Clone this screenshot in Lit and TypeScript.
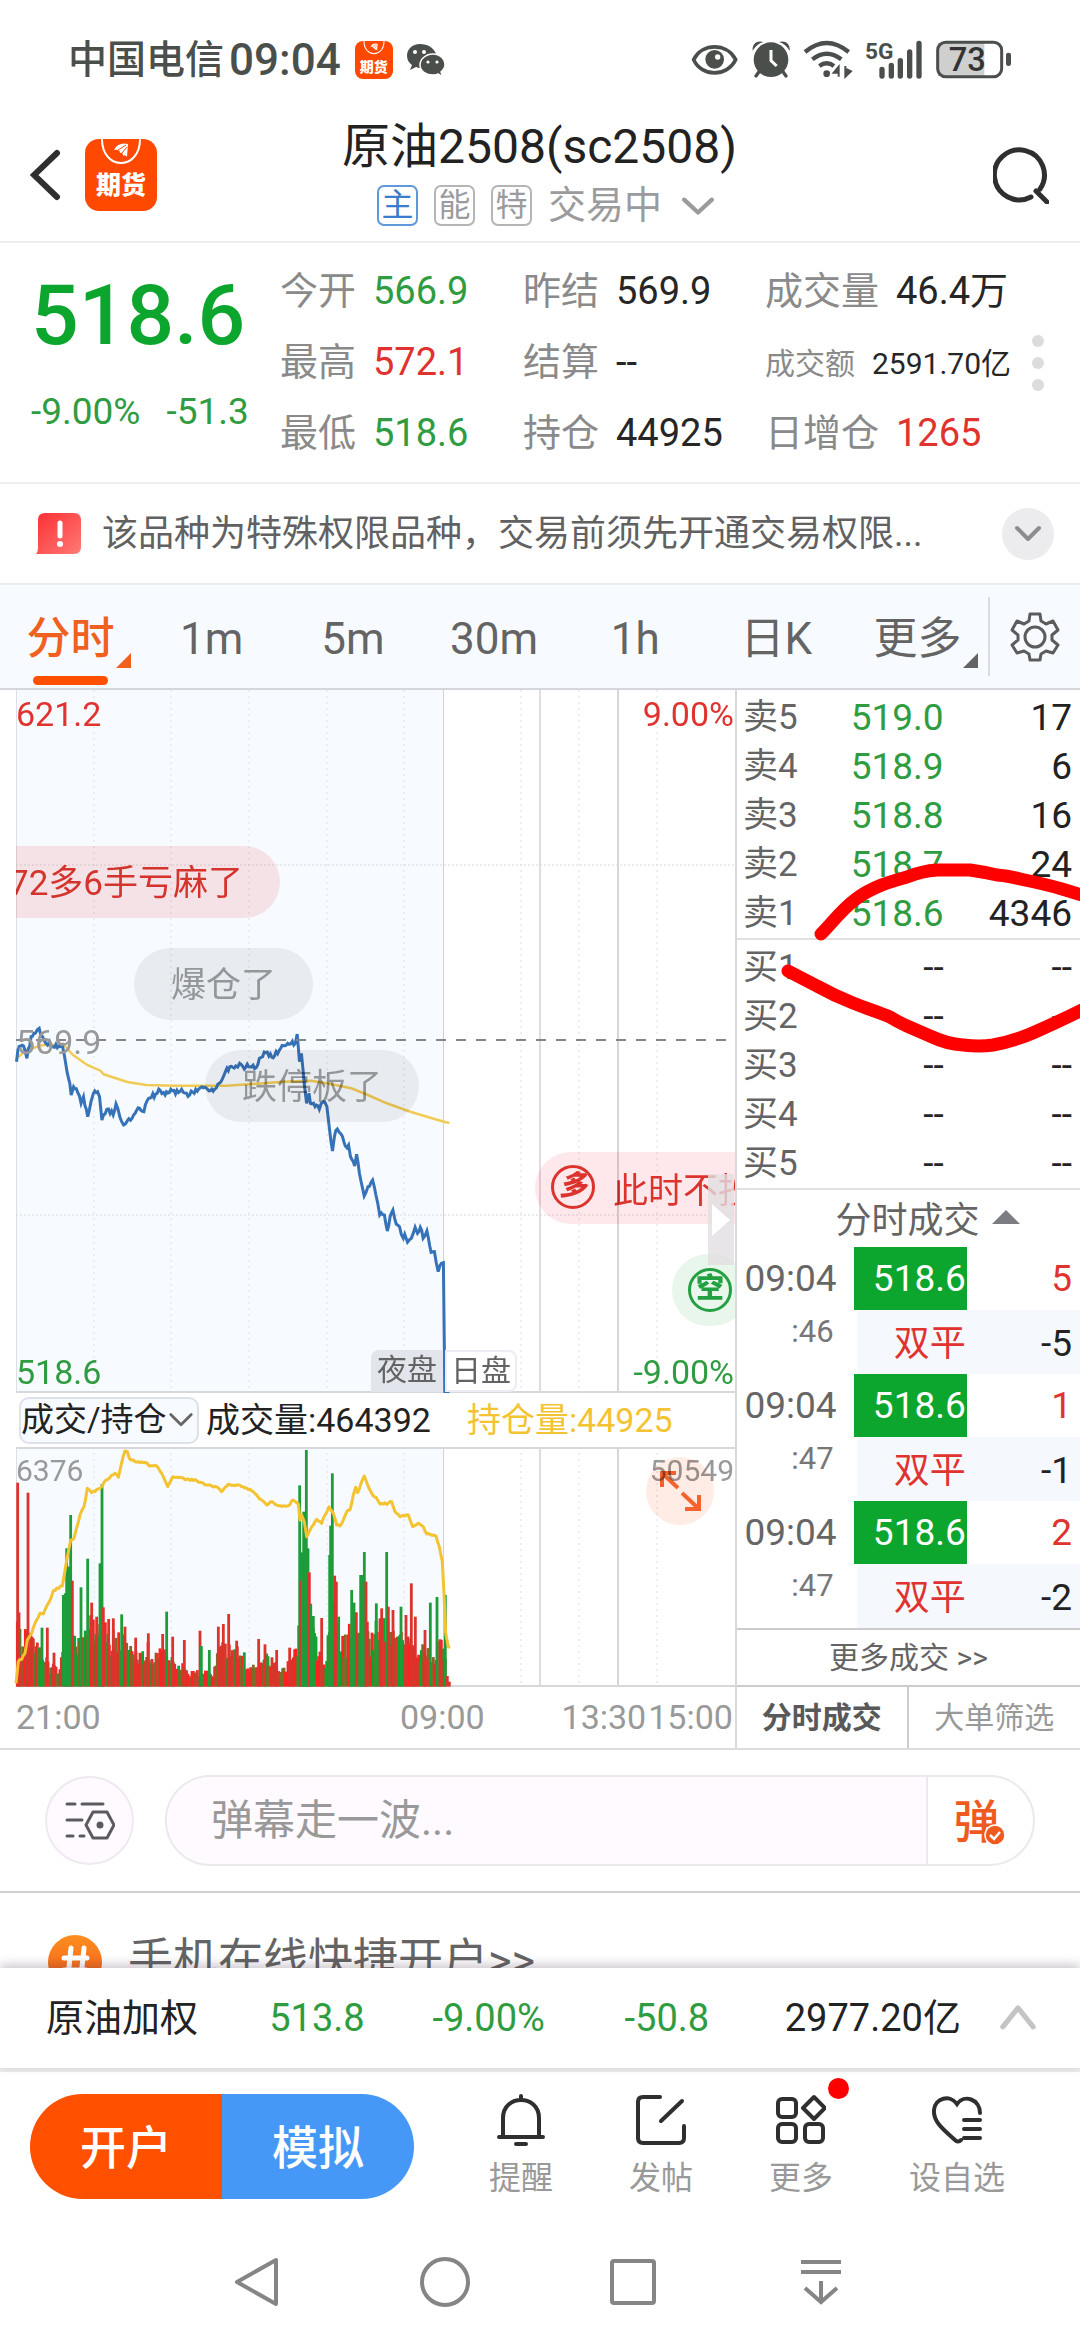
import { LitElement, html, svg, css } from "lit";
import { customElement } from "lit/decorators.js";
import { classMap } from "lit/directives/class-map.js";

type Point = [number, number];
type Spike = [number, number, "up" | "down"];

/* ---------- data ---------- */

const stats = [
  { label: "今开", value: "566.9", tone: "green" },
  { label: "昨结", value: "569.9", tone: "dark" },
  { label: "成交量", value: "46.4万", tone: "dark" },
  { label: "最高", value: "572.1", tone: "red" },
  { label: "结算", value: "--", tone: "dark" },
  { label: "成交额", value: "2591.70亿", tone: "dark", small: true },
  { label: "最低", value: "518.6", tone: "green" },
  { label: "持仓", value: "44925", tone: "dark" },
  { label: "日增仓", value: "1265", tone: "red" },
];

const periods = ["分时", "1m", "5m", "30m", "1h", "日K", "更多"];

const asks = [
  ["卖5", "519.0", "17"],
  ["卖4", "518.9", "6"],
  ["卖3", "518.8", "16"],
  ["卖2", "518.7", "24"],
  ["卖1", "518.6", "4346"],
];
const bids = ["买1", "买2", "买3", "买4", "买5"];

const ticks = [
  { time: "09:04", sec: ":46", price: "518.6", lots: "5", kind: "双平", change: "-5" },
  { time: "09:04", sec: ":47", price: "518.6", lots: "1", kind: "双平", change: "-1" },
  { time: "09:04", sec: ":47", price: "518.6", lots: "2", kind: "双平", change: "-2" },
];

/* Price, average and open-interest series, in units of their own plotting grid. */
const priceRaw: Point[] = [
  [35,425],[38,390],[50,378],[57,415],[66,350],[75,340],[83,325],[90,350],[97,370],[105,365],[112,380],[125,378],[132,375],[137,410],
  [142,455],[148,490],[151,525],[156,500],[165,518],[172,550],[177,530],[186,590],[193,545],[198,520],[207,515],[211,530],[216,600],
  [230,567],[240,585],[246,552],[254,590],[262,615],[270,602],[280,595],[296,565],[305,575],[315,535],[330,522],[340,512],[350,525],
  [362,508],[372,522],[385,508],[402,525],[415,508],[428,500],[440,508],[455,508],[465,490],[475,465],[487,440],[500,438],[508,430],
  [515,440],[530,440],[543,443],[550,415],[560,396],[570,408],[582,408],[595,385],[610,370],[626,370],[630,342],[635,425],[639,400],
  [645,490],[650,550],[655,520],[658,550],[668,560],[677,568],[685,545],[693,560],[698,620],[705,693],[709,650],[715,627],[723,642],
  [732,678],[739,675],[743,710],[752,738],[756,703],[762,760],[772,828],[780,800],[790,780],[797,825],[805,885],[815,885],[821,933],
  [827,890],[833,870],[840,912],[847,920],[855,955],[858,943],[864,967],[872,955],[880,922],[885,940],[891,922],[897,955],[905,933],
  [914,997],[921,995],[929,1055],[936,1030],[940,1028],
];
const averageRaw: Point[] = [
  [35,415],[57,390],[90,375],[135,375],[155,405],[185,435],[213,452],[220,463],[270,486],[310,495],[370,497],[480,497],[560,490],
  [600,485],[660,482],[700,492],[745,505],[780,525],[820,550],[870,575],[905,590],[945,607],[953,609],
];
const interestRaw: Point[] = [
  [48,910],[55,845],[65,838],[75,820],[82,780],[95,760],[105,730],[120,700],[130,702],[148,665],[160,632],[187,618],[200,540],
  [212,480],[222,475],[240,405],[252,380],[262,325],[275,338],[300,325],[318,300],[345,280],[355,292],[368,235],[375,213],[382,215],
  [388,235],[405,245],[440,248],[448,258],[470,258],[485,280],[503,320],[518,290],[560,298],[590,302],[620,315],[650,320],[665,335],
  [685,313],[720,316],[750,328],[770,345],[785,360],[800,375],[815,365],[835,377],[865,377],[880,360],[895,372],[900,420],[905,405],
  [913,425],[920,470],[930,450],[940,435],[950,418],[965,430],[975,405],[987,380],[1000,400],[1010,435],[1020,438],[1030,420],
  [1040,395],[1050,390],[1060,345],[1067,322],[1073,338],[1093,288],[1105,320],[1118,345],[1128,352],[1140,372],[1165,370],
  [1175,365],[1185,395],[1200,410],[1225,405],[1238,440],[1255,430],[1270,440],[1280,462],[1300,465],[1308,468],[1318,500],
  [1327,545],[1332,640],[1337,760],[1345,800],[1350,803],
];
const envelope: Point[] = [
  [48,720],[100,760],[150,850],[182,850],[190,660],[215,680],[230,750],[270,700],[330,730],[370,760],[400,810],[450,780],[500,810],
  [550,840],[570,870],[640,870],[660,770],[720,790],[750,865],[790,800],[840,860],[890,790],[897,640],[910,540],[925,620],[945,750],
  [975,860],[985,740],[1000,640],[1020,780],[1060,710],[1100,750],[1150,690],[1200,750],[1250,790],[1300,790],[1335,760],
];
const spikes: Spike[] = [
  [53,308,"up"],[84,338,"up"],[57,697,"up"],[126,743,"down"],[142,743,"up"],[162,818,"up"],[190,645,"down"],[196,640,"down"],
  [200,505,"down"],[206,560,"down"],[212,405,"down"],[217,602,"up"],[243,622,"down"],[263,536,"down"],[275,668,"up"],[290,710,"up"],
  [300,550,"down"],[306,312,"down"],[310,682,"up"],[326,717,"up"],[340,715,"up"],[365,703,"down"],[375,740,"up"],[407,773,"up"],
  [445,760,"up"],[488,762,"up"],[500,695,"down"],[518,770,"up"],[553,780,"up"],[600,752,"up"],[604,798,"down"],[628,810,"down"],
  [655,740,"up"],[670,732,"up"],[686,702,"up"],[710,782,"up"],[733,817,"down"],[776,777,"up"],[795,793,"up"],[830,810,"up"],
  [869,803,"up"],[899,316,"down"],[902,602,"up"],[907,517,"down"],[911,395,"down"],[915,500,"down"],[919,210,"down"],
  [924,505,"down"],[928,577,"up"],[932,675,"down"],[940,708,"down"],[965,714,"up"],[989,525,"down"],[992,437,"down"],
  [997,280,"down"],[1004,587,"up"],[1009,605,"up"],[1016,710,"down"],[1055,630,"down"],[1062,668,"down"],[1069,697,"up"],
  [1082,585,"down"],[1088,585,"down"],[1093,516,"down"],[1098,605,"up"],[1102,725,"up"],[1129,670,"down"],[1145,685,"up"],
  [1160,516,"down"],[1165,680,"up"],[1179,690,"up"],[1203,680,"down"],[1218,705,"up"],[1234,610,"up"],[1246,710,"up"],
  [1275,750,"up"],[1291,668,"down"],[1311,651,"down"],[1320,778,"up"],[1336,645,"down"],[1342,888,"up"],[1348,905,"up"],
];

/* Small repeatable generator so the minute-by-minute texture is stable. */
function seeded(seed: number) {
  let s = seed;
  return () => {
    s = (s * 16807) % 2147483647;
    return s / 2147483647;
  };
}

function interpolate(points: Point[], x: number): number {
  for (let i = 1; i < points.length; i++) {
    if (x <= points[i][0]) {
      const [x0, y0] = points[i - 1];
      const [x1, y1] = points[i];
      return y0 + ((y1 - y0) * (x - x0)) / (x1 - x0);
    }
  }
  return points[points.length - 1][1];
}

function roughen(points: Point[], step: number, amount: number, seed: number): Point[] {
  const rnd = seeded(seed);
  const out: Point[] = [];
  points.forEach((p, i) => {
    if (i > 0) {
      const [x0, y0] = points[i - 1];
      const n = Math.floor((p[0] - x0) / step);
      for (let k = 1; k < n; k++) {
        const t = k / n;
        out.push([x0 + (p[0] - x0) * t, y0 + (p[1] - y0) * t + (rnd() - 0.5) * amount]);
      }
    }
    out.push(p);
  });
  return out;
}

const toLine = (points: Point[], sx: number, sy: number, dy: number) =>
  points.map(([x, y]) => `${(x / sx).toFixed(1)},${(y / sy + dy).toFixed(1)}`).join(" ");

const priceLine = toLine([...roughen(priceRaw, 3, 16, 77), [943, 1417], [953, 1417]], 2.12, 3, 230);
const averageLine = toLine(averageRaw, 2.12, 3, 230);
const interestLine = toLine(roughen(interestRaw, 5, 6, 31), 3, 3, -67);

function volumeBars() {
  const rnd = seeded(2508);
  const bars: { x: number; y: number; color: string }[] = [];
  for (let x = 52; x < 1338; x += 4) {
    const top = interpolate(envelope, x);
    const y = top + (918 - top) * (rnd() * 0.52);
    const greenZone = (x > 185 && x < 260) || (x > 895 && x < 1000) || (x > 1010 && x < 1140);
    const r = rnd();
    const color = r < (greenZone ? 0.5 : 0.16) ? "#0ca52e" : r < (greenZone ? 0.7 : 0.42) ? "#7d6b28" : r < 0.7 ? "#d8352b" : "#fb2320";
    bars.push({ x, y, color });
  }
  for (const [x, y, dir] of spikes) bars.push({ x, y, color: dir === "up" ? "#dd332d" : "#1e9c3a" });
  return bars;
}
const bars = volumeBars();

/* ---------- icons ---------- */

const chevron = (points: string, cls: string) => html`
  <svg class=${cls} viewBox="0 0 30 30" fill="none" aria-hidden="true">
    <polyline points=${points} stroke="currentColor" stroke-width="4" stroke-linecap="round" stroke-linejoin="round" />
  </svg>`;

const bagMark = html`
  <svg class="bag" viewBox="0 0 72 30" fill="none" aria-hidden="true">
    <path d="M17 0 C17 32 55 32 55 0" stroke="#fff" stroke-width="2" />
    <path d="M29 11 Q33 3 43 5 L42 18 Q40 15 38 17 Q38 13 35 14 Q35 10 29 11Z" fill="#fff" />
    <path d="M33 11 L41 6 M37 14 L42 8" stroke="#ff4800" stroke-width="1" />
  </svg>`;

@customElement("app-root")
export class AppRoot extends LitElement {
  static styles = css`
    :host {
      display: block;
      font-family: Roboto, "Noto Sans CJK SC", sans-serif;
      color: #222;
      background: #fff;
    }
    * { box-sizing: border-box; }
    button {
      font: inherit;
      color: inherit;
      background: none;
      border: 0;
      padding: 0;
      margin: 0;
    }
    svg { display: block; }
    .page { height: 100vh; display: flex; flex-direction: column; overflow: hidden; }
    .page > * { flex-shrink: 0; }
    .green { color: #2f9c41; }
    .red { color: #e0332f; }
    .dark { color: #262626; }

    /* status bar */
    .status { display: flex; align-items: center; height: 120px; padding: 0 69px 0 68px; color: #4b4f4c; }
    .carrier { font-size: 39px; font-weight: 500; line-height: 48px; }
    .clock { font-size: 44px; font-weight: 500; line-height: 48px; margin-left: 5px; }
    .mini-logo { width: 38px; height: 38px; border-radius: 8px; margin-left: 14px; font-size: 14px; }
    .wechat { width: 39px; height: 36px; margin-left: 13px; }
    .status-right { display: flex; align-items: center; gap: 12px; margin-left: auto; }
    .logo {
      display: flex;
      flex-direction: column;
      background: #ff4800;
      color: #fff;
      font-weight: 900;
      text-align: center;
      overflow: hidden;
    }
    .bag { width: 100%; height: auto; }
    .mini-logo span { line-height: 20px; }

    /* header */
    .header {
      display: grid;
      grid-template-columns: 1fr auto 1fr;
      height: 123px;
      padding: 0 31px 0 30px;
      border-bottom: 2px solid #eee;
    }
    .lead { display: flex; align-items: center; gap: 24px; padding-bottom: 12px; }
    .back { width: 31px; height: 52px; }
    .app-logo { width: 72px; height: 72px; border-radius: 14px; font-size: 25px; }
    .app-logo span { line-height: 34px; }
    .title { display: flex; flex-direction: column; align-items: center; }
    .title h1 { margin: 0; font-size: 48px; font-weight: 400; line-height: 54px; }
    .sub { display: flex; align-items: center; gap: 16px; height: 62px; padding-left: 12px; color: #9b9b9e; font-size: 38px; line-height: 44px; }
    .badge {
      width: 41px;
      height: 41px;
      border: 2px solid #b5b5b5;
      border-radius: 7px;
      font-size: 32px;
      line-height: 36px;
      text-align: center;
    }
    .badge.main { color: #3a7dcc; border-color: #5f98dc; }
    .down { width: 32px; height: 32px; margin-left: 4px; }
    .search { justify-self: end; align-self: center; width: 56px; height: 58px; margin-top: -12px; }

    /* quote */
    .quote { display: flex; height: 241px; padding-left: 31px; border-bottom: 2px solid #eee; }
    .last { width: 249px; display: flex; flex-direction: column; padding-top: 23px; }
    .price { font-size: 84px; font-weight: 500; line-height: 100px; color: #0ca52e; }
    .change { display: flex; gap: 26px; font-size: 37px; line-height: 40px; margin-top: 26px; white-space: nowrap; }
    .stats {
      flex: 1;
      display: grid;
      grid-template-columns: 243fr 242fr 250fr;
      grid-template-rows: repeat(3, 71px);
      align-items: center;
      margin: 0;
      padding-top: 12px;
    }
    .stat { display: flex; align-items: center; gap: 17px; font-size: 38px; line-height: 48px; white-space: nowrap; }
    .stat.small { font-size: 30px; padding-top: 4px; }
    .stat dt { color: #8a8a8a; }
    .stat dd { margin: 0; }
    .more-dots { align-self: center; width: 65px; padding-right: 19px; display: flex; flex-direction: column; align-items: center; gap: 10px; }
    .more-dots i { width: 12px; height: 12px; border-radius: 6px; background: #dcdcdc; }

    /* notice */
    .notice { display: flex; align-items: center; height: 101px; padding: 0 26px 0 36px; border-bottom: 2px solid #ececec; }
    .alert { width: 46px; height: 43px; }
    .notice p { flex: 1; margin: 0 0 0 20px; font-size: 36px; line-height: 44px; color: #616161; }
    .round { width: 52px; height: 52px; border-radius: 26px; background: #ececee; color: #8c8c8c; display: flex; align-items: center; justify-content: center; }
    .round svg { width: 30px; height: 30px; }

    /* periods */
    .periods { display: flex; height: 105px; background: #f7fbff; border-bottom: 2px solid #d3d7dc; color: #646464; }
    .period-list { flex: 11; display: grid; grid-template-columns: repeat(7, 1fr); }
    .period { position: relative; font-size: 44px; line-height: 56px; padding-top: 4px; }
    .period.active { color: #f0601f; font-weight: 500; }
    .period.active::before {
      content: "";
      position: absolute;
      left: 33px;
      bottom: 3px;
      width: 75px;
      height: 9px;
      border-radius: 5px;
      background: #ff5000;
    }
    .period.fold::after {
      content: "";
      position: absolute;
      right: 10px;
      bottom: 20px;
      border-left: 15px solid transparent;
      border-bottom: 15px solid currentColor;
    }
    .gear { flex: 1; display: flex; align-items: center; justify-content: center; border-left: 2px solid #d8dde2; margin: 12px 0; }
    .gear svg { width: 50px; height: 50px; }

    /* chart */
    .market { display: grid; grid-template-columns: 49fr 23fr; border-bottom: 2px solid #dcdcdc; }
    .charts { min-width: 0; }
    .plot { position: relative; overflow: hidden; isolation: isolate; background: #fff; }
    .plot > svg { width: 100%; height: auto; }
    .tag { position: absolute; font-size: 34px; line-height: 40px; }
    .gray { color: #999; }
    .t-high { left: 16px; top: 4px; }
    .t-up { right: 1px; top: 4px; }
    .t-mid { left: 16px; top: 332px; }
    .t-low { left: 16px; bottom: 1px; }
    .t-down { right: 1px; bottom: 1px; }
    .session { position: absolute; bottom: 1px; height: 42px; font-size: 30px; line-height: 40px; color: #636363; padding: 0 6px; }
    .night { right: 292px; background: #e2e6ec; border-radius: 8px 0 0 0; }
    .day { left: 445px; border: 2px solid #ececf4; border-radius: 0 8px 8px 0; background: #fff; line-height: 38px; padding: 0 4px; }
    /* multiply keeps the price lines at full strength beneath the comments */
    .bubbles { position: absolute; top: 0; bottom: 0; left: 16px; right: 0; overflow: hidden; mix-blend-mode: multiply; }
    .bubble {
      position: absolute;
      display: flex;
      align-items: center;
      height: 72px;
      padding: 0 37px 6px;
      border-radius: 36px;
      font-size: 35px;
      white-space: nowrap;
      color: #999;
      background: #f0efef;
    }
    .b1 { right: 455px; top: 156px; color: #dc332d; background: #fce6e6; }
    .b2 { left: 118px; top: 258px; }
    .b3 { left: 189px; top: 360px; }
    .b4 { left: 519px; top: 462px; padding: 0 16px 2px; gap: 18px; color: #dc332d; background: #ffe8ec; }
    .b5 { left: 656px; top: 564px; padding: 0 16px; color: #23a041; background: #e8f6eb; }
    .seal {
      width: 44px;
      height: 44px;
      border: 3px solid currentColor;
      border-radius: 22px;
      font-size: 28px;
      font-weight: 900;
      line-height: 36px;
      text-align: center;
      font-style: italic;
      flex-shrink: 0;
    }
    .seal.upright { font-style: normal; }
    .drawer {
      position: absolute;
      right: 1px;
      top: 484px;
      width: 26px;
      height: 91px;
      background: rgba(226, 222, 226, 0.8);
      display: flex;
      align-items: center;
      justify-content: center;
    }
    .drawer svg { width: 20px; height: 36px; }

    .legend { display: flex; align-items: center; height: 54px; padding-left: 19px; font-size: 33px; line-height: 40px; white-space: nowrap; }
    .indicator { display: flex; align-items: center; height: 47px; width: 180px; border: 2px solid #dde2ea; border-radius: 10px; background: #f7fbff; }
    .indicator svg { width: 28px; height: 28px; color: #666; }
    .indicator svg polyline { stroke-width: 3; }
    .legend span { font-size: 34px; }
    .volume { margin-left: 7px; }
    .interest { margin-left: 36px; color: #f3c332; }
    .v-left, .v-right { font-size: 30px; }
    .v-left { left: 16px; top: 4px; }
    .v-right { right: 1px; top: 4px; }
    .expand { position: absolute; right: 21px; top: 10px; width: 68px; height: 68px; border-radius: 34px; background: #ffece5; mix-blend-mode: multiply; }
    .expand svg { width: 68px; height: 68px; }
    .axis { display: grid; grid-template-columns: 385fr 162fr 83fr 2fr 87fr; height: 61px; padding: 0 0 0 16px; font-size: 34px; line-height: 61px; color: #999; }
    .axis span { white-space: nowrap; }

    /* depth */
    .depth { position: relative; min-width: 0; border-left: 2px solid #d9d9dc; }
    .book { width: 100%; border-collapse: collapse; table-layout: fixed; font-size: 36px; }
    .book-part { padding: 3px 8px 0 6px; border-bottom: 2px solid #dfdfe2; }
    .book td, .book th { padding: 0; height: 49px; line-height: 49px; text-align: right; font-weight: 400; white-space: nowrap; }
    .book th { text-align: left; color: #646464; font-size: 35px; }
    .book td { font-size: 37px; }
    .book col.c-name { width: 24%; }
    .book col.c-price { width: 37%; }
    .book col.c-qty { width: 39%; }
    .scribble { position: absolute; left: 0; top: 0; width: 100%; height: auto; pointer-events: none; }
    .tick-head { display: flex; align-items: center; justify-content: center; gap: 12px; width: 100%; height: 57px; font-size: 36px; color: #646464; padding: 0 0 4px 38px; }
    .tick-head svg { width: 28px; height: 16px; }
    .ticks { width: 100%; border-collapse: collapse; table-layout: fixed; }
    .ticks td, .ticks th { padding: 0; height: 63px; text-align: right; font-weight: 400; font-size: 37px; line-height: 63px; }
    .ticks tr.second td { height: 64px; padding-top: 4px; line-height: 60px; }
    .ticks col.c-time { width: 34%; }
    .ticks th { color: #666; padding-right: 17px; }
    .ticks .sec { font-size: 31px; line-height: 44px; color: #777; vertical-align: top; }
    .ticks td.fill { background: #0ca52e; color: #fff; padding-right: 1px; }
    .ticks tr.second td { background: #f5f9fe; }
    .ticks td.kind { padding-right: 1px; border-left: 6px solid #fff; font-size: 36px; }
    .ticks td.lots { padding-right: 8px; }
    .more-ticks { display: block; width: 100%; height: 59px; border-top: 2px solid #ccc; border-bottom: 2px solid #ccc; font-size: 30px; line-height: 40px; color: #646464; }
    .depth-tabs { display: grid; grid-template-columns: 1fr 1fr; height: 61px; font-size: 30px; line-height: 40px; color: #999; }
    .depth-tabs .on { color: #595959; font-weight: 700; border-right: 2px solid #ccc; }

    /* comment */
    .comment { display: flex; align-items: center; gap: 31px; height: 143px; padding: 0 45px; border-bottom: 2px solid #d0d0d0; }
    .filter { width: 89px; height: 89px; border: 2px solid #eeeaf0; border-radius: 45px; background: #fefaff; display: flex; align-items: center; justify-content: center; flex-shrink: 0; }
    .filter svg { width: 50px; height: 40px; }
    .field { flex: 1; display: flex; height: 91px; border: 2px solid #ebe9ed; border-radius: 46px; overflow: hidden; min-width: 0; }
    .field input { flex: 1; min-width: 0; border: 0; padding: 0 44px; background: #fefaff; font: inherit; font-size: 42px; color: #222; outline: 0; }
    .field input::placeholder { color: #999; opacity: 1; }
    .bullet { position: relative; width: 107px; padding: 0 8px 6px 0; border-left: 2px solid #ebe9ed; font-size: 46px; font-weight: 500; color: #f05a20; }
    .bullet svg { position: absolute; left: 56px; top: 47px; width: 22px; height: 22px; }

    /* feed */
    .page > .feed { flex: 1 1 0; min-height: 0; overflow: hidden; display: flex; align-items: flex-start; gap: 26px; padding: 42px 48px 0; color: #646464; font-size: 45px; line-height: 52px; }
    .feed a { color: inherit; text-decoration: none; white-space: nowrap; }
    .hash { width: 54px; height: 54px; flex-shrink: 0; }

    /* weighted index */
    .index { position: relative; display: grid; grid-template-columns: 223fr 163fr 192fr 160fr 214fr auto; align-items: center; height: 100px; padding: 0 43px 0 46px; background: #fff; box-shadow: 0 -3px 10px rgba(60, 40, 60, 0.28); font-size: 38px; line-height: 48px; white-space: nowrap; }
    .index svg { width: 38px; height: 44px; color: #c4c4c4; }

    /* actions */
    .actions { display: flex; height: 152px; padding: 22px 0 0 30px; border-top: 4px solid #ededed; }
    .pill { display: flex; width: 384px; height: 105px; border-radius: 53px; overflow: hidden; color: #fff; font-size: 46px; font-weight: 500; }
    .pill button { flex: 1; padding-bottom: 5px; }
    .open { background: #ff5000; }
    .demo { background: #4698f7; }
    .tools { display: flex; gap: 76px; margin-left: 75px; }
    .tool { position: relative; display: flex; flex-direction: column; align-items: center; font-size: 32px; line-height: 40px; color: #999; }
    .tool svg { width: 50px; height: 52px; margin-bottom: 12px; }
    .dot { position: absolute; top: -16px; right: -16px; width: 21px; height: 21px; border-radius: 11px; background: #ff0000; }

    .system { display: flex; align-items: flex-start; justify-content: center; gap: 138px; height: 120px; padding: 37px 3px 0 0; }
    .system svg { width: 50px; height: 50px; }
  `;

  private statusBar() {
    return html`
      <header class="status">
        <span class="carrier">中国电信</span><span class="clock">09:04</span>
        <div class="logo mini-logo">${bagMark}<span>期货</span></div>
        <svg class="wechat" viewBox="0 0 39 36" aria-hidden="true">
          <path d="M14 2 C6 2 1 7 1 14 C1 18 3 21 6 23 L4 28 L10 25 C12 26 14 26 16 26 L30 12 C28 6 22 2 14 2Z" fill="#4b4f4c" />
          <path d="M27 12 C20 12 14 17 14 23 C14 29 20 33 27 33 C29 33 31 33 32 32 L37 35 L35 30 C37 28 39 26 39 23 C39 17 34 12 27 12Z" fill="#4b4f4c" stroke="#fff" stroke-width="1.5" />
          <g fill="#fff"><circle cx="9" cy="10" r="2" /><circle cx="18" cy="10" r="2" /><circle cx="22" cy="20" r="1.6" /><circle cx="31" cy="20" r="1.6" /></g>
        </svg>
        <div class="status-right">
          <svg width="48" height="42" viewBox="62 57 144 126" aria-label="护眼">
            <path d="M70 119 C95 68 170 68 196 119 C170 172 95 172 70 119Z" fill="none" stroke="#4b4f4c" stroke-width="11" />
            <circle cx="133" cy="118" r="28" fill="#4b4f4c" /><circle cx="142" cy="111" r="8" fill="#fff" />
          </svg>
          <svg width="40" height="42" viewBox="241 57 120 126" aria-label="闹钟">
            <circle cx="301" cy="119" r="52" fill="#4b4f4c" />
            <path d="M266 154 L256 168 M336 154 L346 168" stroke="#4b4f4c" stroke-width="10" stroke-linecap="round" />
            <path d="M246 92 C244 72 258 60 278 66 C264 70 254 80 246 92Z M357 92 C359 72 345 60 325 66 C339 70 349 80 357 92Z" fill="#4b4f4c" />
            <path d="M301 90 V122 L318 138" fill="none" stroke="#fff" stroke-width="9" />
          </svg>
          <svg width="50" height="42" viewBox="399 57 150 126" aria-label="无线网络">
            <g fill="none" stroke="#4b4f4c" stroke-width="13">
              <path d="M405 96 Q470 42 536 96" /><path d="M427 118 Q470 84 514 118" /><path d="M448 138 Q470 122 492 138" />
            </g>
            <circle cx="470" cy="161" r="10" fill="#4b4f4c" />
            <path d="M506 138 V170 M506 140 L491 158 H506Z M526 138 V170 L543 154 L526 146Z" fill="#4b4f4c" stroke="#4b4f4c" stroke-width="6" />
          </svg>
          <svg width="58" height="42" viewBox="574 57 174 126" aria-label="5G信号">
            <text x="574" y="116" font-size="68" font-weight="700" fill="#4b4f4c">5G</text>
            <path d="M625 148 V168 M653 136 V168 M680 122 V168 M708 96 V168 M736 70 V168" stroke="#4b4f4c" stroke-width="16" stroke-linecap="round" />
          </svg>
          <svg width="76" height="42" viewBox="789 57 228 126" aria-label="电量">
            <rect x="797" y="68" width="140" height="100" fill="#cfcfcf" />
            <rect x="797" y="67" width="192" height="103" rx="24" fill="none" stroke="#4b4f4c" stroke-width="9" />
            <rect x="1002" y="98" width="15" height="40" rx="7" fill="#4b4f4c" />
            <text x="886" y="154" font-size="98" font-weight="500" text-anchor="middle" fill="#333">73</text>
          </svg>
        </div>
      </header>`;
  }

  private header() {
    return html`
      <div class="header">
        <div class="lead">
          <button aria-label="返回">
            <svg class="back" viewBox="0 0 31 52" fill="none"><path d="M27 4 L4 26 L27 48" stroke="#2f2f2f" stroke-width="6" stroke-linecap="round" /></svg>
          </button>
          <div class="logo app-logo">${bagMark}<span>期货</span></div>
        </div>
        <div class="title">
          <h1>原油2508(sc2508)</h1>
          <div class="sub">
            <span class="badge main">主</span><span class="badge">能</span><span class="badge">特</span>
            <span>交易中</span>${chevron("2,10 15,22 28,10", "down")}
          </div>
        </div>
        <button class="search" aria-label="搜索">
          <svg viewBox="0 0 56 58" fill="none"><path d="M38 51 A25 25 0 1 1 47 43" stroke="#2f2f2f" stroke-width="5" stroke-linecap="round" /><path d="M43 45 L54 56" stroke="#2f2f2f" stroke-width="5" stroke-linecap="round" /></svg>
        </button>
      </div>`;
  }

  private quote() {
    return html`
      <section class="quote">
        <div class="last">
          <div class="price">518.6</div>
          <div class="change green"><span>-9.00%</span><span>-51.3</span></div>
        </div>
        <dl class="stats">
          ${stats.map((s) => html`
            <div class=${classMap({ stat: true, small: !!s.small })}><dt>${s.label}</dt><dd class=${s.tone}>${s.value}</dd></div>`)}
        </dl>
        <button class="more-dots" aria-label="更多行情"><i></i><i></i><i></i></button>
      </section>
      <section class="notice">
        <svg class="alert" viewBox="0 0 46 43" aria-hidden="true">
          <defs><linearGradient id="al" x1="0" y1="0" x2="1" y2="1"><stop offset="0" stop-color="#fb2f33" /><stop offset="1" stop-color="#ff7a76" /></linearGradient></defs>
          <path d="M9 1 H38 Q45 1 45 8 V35 Q45 42 38 42 H0 Q2 40 2 35 V8 Q2 1 9 1Z" fill="url(#al)" />
          <path d="M24 11 V24" stroke="#fff" stroke-width="5" stroke-linecap="round" /><circle cx="24" cy="32" r="3" fill="#fff" />
        </svg>
        <p>该品种为特殊权限品种，交易前须先开通交易权限...</p>
        <button class="round" aria-label="展开">${chevron("4,9 15,20 26,9", "")}</button>
      </section>`;
  }

  private periodBar() {
    return html`
      <nav class="periods">
        <div class="period-list">
          ${periods.map((p, i) => html`<button class=${classMap({ period: true, active: i === 0, fold: i === 0 || i === 6 })}>${p}</button>`)}
        </div>
        <button class="gear" aria-label="设置">
          <svg viewBox="0 0 50 50" fill="none" stroke="#5c5c5c" stroke-width="3" stroke-linejoin="round">
            <path d="M20 2 H30 L31 9 L36 12 L43 9 L48 18 L42 23 V28 L48 33 L43 41 L36 39 L31 42 L30 48 H20 L19 42 L14 39 L7 41 L2 33 L8 28 V23 L2 18 L7 9 L14 12 L19 9Z" />
            <circle cx="25" cy="25" r="10" />
          </svg>
        </button>
      </nav>`;
  }

  private grid(height: number) {
    return svg`
      <rect x="16" y="0" width="427" height=${height} fill="#f7fbff" />
      <path d=${`M94 0 V${height} M171 0 V${height} M249 0 V${height} M327 0 V${height} M404 0 V${height} M521 0 V${height} M579 0 V${height} M657 0 V${height}`} stroke="#dcdfe3" stroke-dasharray="2 4" />
      <path d=${`M540 0 V${height}`} stroke="#d6d0d6" stroke-width="1.5" />
      <path d=${`M618 0 V${height}`} stroke="#c8c8cc" stroke-width="1.5" />
      <path d=${`M443.5 0 V${height}`} stroke="#d9cdd5" />
      <path d=${`M16.5 0 V${height}`} stroke="#dcdfe6" />`;
  }

  private charts() {
    return html`
      <div class="charts">
        <div class="plot">
          <svg viewBox="0 0 735 703" role="img" aria-label="分时走势">
            ${this.grid(702)}
            <path d="M16 175 H735 M16 525 H735" stroke="#d8d8dc" stroke-dasharray="2 2" />
            <path d="M16 702 H735" stroke="#d8d8dc" stroke-width="2" />
            <polyline points=${averageLine} fill="none" stroke="#f1cb55" stroke-width="2.5" />
            <polyline points=${priceLine} fill="none" stroke="#3672b8" stroke-width="3" />
            <path d="M16 350 H735" stroke="#858585" stroke-width="2" stroke-dasharray="10 10" />
          </svg>
          <span class="tag red t-high">621.2</span><span class="tag red t-up">9.00%</span>
          <span class="tag gray t-mid">569.9</span>
          <span class="tag green t-low">518.6</span><span class="tag green t-down">-9.00%</span>
          <span class="session night">夜盘</span><span class="session day">日盘</span>
          <div class="bubbles">
            <span class="bubble b1">572多6手亏麻了</span>
            <span class="bubble b2">爆仓了</span>
            <span class="bubble b3">跌停板了</span>
            <span class="bubble b4"><span class="seal">多</span>此时不抄</span>
            <span class="bubble b5"><span class="seal upright">空</span></span>
          </div>
          <button class="drawer" aria-label="收起盘口"><svg viewBox="0 0 20 36"><path d="M1 2 L19 18 L1 34Z" fill="#fff" /></svg></button>
        </div>
        <div class="legend">
          <button class="indicator">成交/持仓${chevron("4,9 15,20 26,9", "")}</button>
          <span class="volume">成交量:464392</span><span class="interest">持仓量:44925</span>
        </div>
        <div class="plot">
          <svg viewBox="0 0 735 240" role="img" aria-label="成交量与持仓量">
            ${this.grid(239)}
            <path d="M16 1 H735 M16 239 H735" stroke="#d8d8dc" stroke-width="2" />
            ${bars.map((b) => svg`<rect x=${b.x / 3 - 1.4} y=${b.y / 3 - 67} width="2.8" height=${Math.max(0, 306.5 - b.y / 3)} fill=${b.color} />`)}
            <polyline points=${interestLine} fill="none" stroke="#f3c332" stroke-width="3" stroke-linejoin="round" />
          </svg>
          <span class="tag gray v-left">6376</span><span class="tag gray v-right">50549</span>
          <button class="expand" aria-label="横屏">
            <svg viewBox="0 0 68 68" fill="none" stroke="#f5622b" stroke-width="4"><path d="M16 30 V16 H30 M17 17 L32 31 M36 36 L52 51 M53 38 V52 H39" /></svg>
          </button>
        </div>
        <div class="axis"><span>21:00</span><span>09:00</span><span>13:30</span><span></span><span>15:00</span></div>
      </div>`;
  }

  private book(caption: string, rows: string[][]) {
    return html`
      <div class="book-part">
        <table class="book" aria-label=${caption}>
          <colgroup><col class="c-name" /><col class="c-price" /><col class="c-qty" /></colgroup>
          <tbody>
            ${rows.map(([name, price, qty]) => html`
              <tr><th scope="row">${name}</th><td class=${price === "--" ? "dark" : "green"}>${price}</td><td>${qty}</td></tr>`)}
          </tbody>
        </table>
      </div>`;
  }

  private depth() {
    return html`
      <div class="depth">
        ${this.book("卖盘", asks)}
        ${this.book("买盘", bids.map((b) => [b, "--", "--"]))}
        <button class="tick-head">分时成交<svg viewBox="0 0 28 16"><path d="M0 15 L14 1 L28 15Z" fill="#7b7d82" /></svg></button>
        <table class="ticks">
          <colgroup><col class="c-time" /><col /><col /></colgroup>
          <tbody>
            ${ticks.map((t) => html`
              <tr><th scope="row">${t.time}</th><td class="fill">${t.price}</td><td class="lots red">${t.lots}</td></tr>
              <tr class="second"><th class="sec">${t.sec}</th><td class="kind red">${t.kind}</td><td class="lots">${t.change}</td></tr>`)}
          </tbody>
        </table>
        <button class="more-ticks">更多成交 &gt;&gt;</button>
        <div class="depth-tabs"><button class="on">分时成交</button><button>大单筛选</button></div>
        <svg class="scribble" viewBox="737 690 343 400" fill="none" stroke="#ff0000" stroke-width="13" stroke-linecap="round" stroke-linejoin="round" aria-hidden="true">
          <path d="M821 934 C833 922 842 909 856 899 C872 887 889 882 907 877 Q922 871 937 870 H970 Q984 872 997 875 Q1010 876 1020 879 Q1045 884 1062 889 L1088 897" />
          <path d="M788 971 L817 986 Q835 996 853 1003 C868 1009 878 1012 890 1017 Q898 1022 907 1026 L930 1036 Q947 1044 963 1045 Q980 1047 993 1045 Q1015 1041 1035 1032 Q1062 1020 1088 1007" />
        </svg>
      </div>`;
  }

  private bottom() {
    const ink = "#2f2f2f";
    return html`
      <section class="comment">
        <button class="filter" aria-label="弹幕设置">
          <svg viewBox="0 0 50 40" fill="none" stroke="#5c5a5e" stroke-width="3" stroke-linecap="round">
            <path d="M2 3 H10 M17 3 H38 M2 19 H17 M2 35 H8 M15 35 H19" />
            <path d="M28 11 H42 L49 24 L42 37 H28 L21 24Z" stroke-linejoin="round" /><circle cx="35" cy="24" r="2" fill="#5c5a5e" />
          </svg>
        </button>
        <div class="field">
          <input type="text" placeholder="弹幕走一波..." aria-label="弹幕" />
          <button class="bullet">弹<svg viewBox="0 0 22 22"><circle cx="11" cy="11" r="10" fill="#f05a20" stroke="#fff" stroke-width="1.5" /><path d="M6 11 L10 15 L16 8" fill="none" stroke="#fff" stroke-width="2.5" /></svg></button>
        </div>
      </section>
      <section class="feed">
        <svg class="hash" viewBox="0 0 54 54" aria-hidden="true">
          <defs><linearGradient id="hg" x1="0" y1="0" x2="0" y2="1"><stop offset="0" stop-color="#fc8e1f" /><stop offset="1" stop-color="#f65a1c" /></linearGradient></defs>
          <circle cx="27" cy="27" r="27" fill="url(#hg)" />
          <path d="M23 13 L20 42 M36 13 L33 42 M16 23 H39 M16 35 H38" stroke="#fff" stroke-width="5" stroke-linecap="round" />
        </svg>
        <a href="#open">手机在线快捷开户&gt;&gt;</a>
      </section>
      <section class="index">
        <span>原油加权</span><span class="green">513.8</span><span class="green">-9.00%</span><span class="green">-50.8</span><span>2977.20亿</span>
        ${chevron("3,22 15,7 27,22", "")}
      </section>
      <nav class="actions">
        <div class="pill"><button class="open">开户</button><button class="demo">模拟</button></div>
        <div class="tools">
          <button class="tool">
            <svg viewBox="0 0 50 52" fill="none" stroke=${ink} stroke-width="4" stroke-linecap="round"><path d="M25 2 V6 M7 42 V24 C7 0 43 0 43 24 V42 M3 43 H47 M20 50 H30" /></svg>提醒
          </button>
          <button class="tool">
            <svg viewBox="0 0 50 52" fill="none" stroke=${ink} stroke-width="4" stroke-linecap="round"><path d="M24 3 H7 Q2 3 2 8 V44 Q2 49 7 49 H43 Q48 49 48 44 V32 M46 7 L25 27" /></svg>发帖
          </button>
          <button class="tool">
            <svg viewBox="0 0 50 52" fill="none" stroke=${ink} stroke-width="4" stroke-linejoin="round">
              <rect x="2" y="5" width="18" height="18" rx="4" /><rect x="2" y="30" width="18" height="18" rx="4" /><rect x="29" y="30" width="18" height="18" rx="4" />
              <path d="M38 3 L49 14 L38 25 L27 14Z" />
            </svg>更多<i class="dot"></i>
          </button>
          <button class="tool">
            <svg viewBox="0 0 50 52" fill="none" stroke=${ink} stroke-width="4" stroke-linecap="round"><path d="M29 46 Q26 49 23 46 C12 36 1 28 2 16 C3 4 18 0 25 10 C32 0 48 5 48 19 M32 26 H48 M32 35 H48 M32 44 H48" /></svg>设自选
          </button>
        </div>
      </nav>
      <footer class="system">
        <button aria-label="返回"><svg viewBox="0 0 50 50" fill="none" stroke="#858585" stroke-width="4" stroke-linejoin="round"><path d="M44 3 V47 L5 25Z" /></svg></button>
        <button aria-label="主屏"><svg viewBox="0 0 50 50" fill="none" stroke="#858585" stroke-width="4"><circle cx="25" cy="25" r="23" /></svg></button>
        <button aria-label="最近任务"><svg viewBox="0 0 50 50" fill="none" stroke="#858585" stroke-width="4"><rect x="4" y="4" width="42" height="42" rx="2" /></svg></button>
        <button aria-label="下拉"><svg viewBox="0 0 50 50" fill="none" stroke="#858585" stroke-width="4"><path d="M5 5 H45 M5 15 H45 M25 24 V45 M9 31 L25 45 L41 31" /></svg></button>
      </footer>`;
  }

  render() {
    return html`
      <div class="page">
        ${this.statusBar()}${this.header()}${this.quote()}${this.periodBar()}
        <section class="market">${this.charts()}${this.depth()}</section>
        ${this.bottom()}
      </div>`;
  }
}
